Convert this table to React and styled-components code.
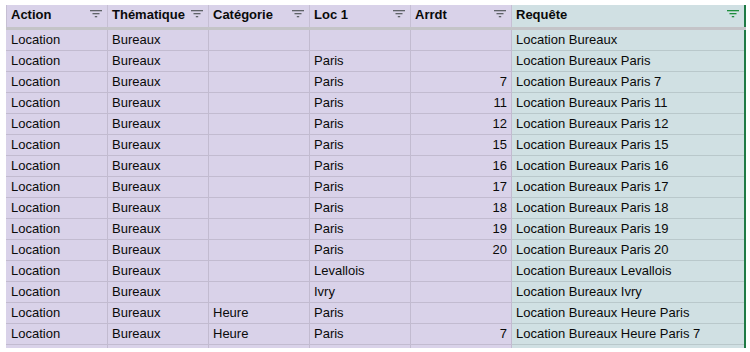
import React from 'react'
import styled, { createGlobalStyle } from 'styled-components'

const GlobalStyle = createGlobalStyle`
  html, body {
    margin: 0;
    padding: 0;
    background: #ffffff;
  }
`

const columns = [
  { label: 'Action', width: 101 },
  { label: 'Thématique', width: 101 },
  { label: 'Catégorie', width: 101 },
  { label: 'Loc 1', width: 101 },
  { label: 'Arrdt', width: 101 },
  { label: 'Requête', width: 233, result: true },
]

const rows = [
  ['Location', 'Bureaux', '', '', ''],
  ['Location', 'Bureaux', '', 'Paris', ''],
  ['Location', 'Bureaux', '', 'Paris', '7'],
  ['Location', 'Bureaux', '', 'Paris', '11'],
  ['Location', 'Bureaux', '', 'Paris', '12'],
  ['Location', 'Bureaux', '', 'Paris', '15'],
  ['Location', 'Bureaux', '', 'Paris', '16'],
  ['Location', 'Bureaux', '', 'Paris', '17'],
  ['Location', 'Bureaux', '', 'Paris', '18'],
  ['Location', 'Bureaux', '', 'Paris', '19'],
  ['Location', 'Bureaux', '', 'Paris', '20'],
  ['Location', 'Bureaux', '', 'Levallois', ''],
  ['Location', 'Bureaux', '', 'Ivry', ''],
  ['Location', 'Bureaux', 'Heure', 'Paris', ''],
  ['Location', 'Bureaux', 'Heure', 'Paris', '7'],
  ['', '', '', '', ''],
]

const requete = (r) => r.filter(Boolean).join(' ')

const FilterIcon = ({ color }) => (
  <svg width="12" height="8" viewBox="0 0 12 8">
    <rect x="0" y="0" width="12" height="1.3" fill={color} />
    <rect x="2.5" y="3" width="7" height="1.3" fill={color} />
    <rect x="4.8" y="6" width="2.4" height="1.3" fill={color} />
  </svg>
)

const App = () => (
  <Page>
    <GlobalStyle />
    <Sheet>
      <colgroup>
        {columns.map((c) => (
          <col key={c.label} style={{ width: c.width }} />
        ))}
      </colgroup>
      <thead>
        <tr>
          {columns.map((c) => (
            <HeadCell key={c.label} result={c.result ? 1 : 0}>
              <HeadInner>
                <span>{c.label}</span>
                <FilterIcon color={c.result ? '#1e8e3e' : '#5f6368'} />
              </HeadInner>
            </HeadCell>
          ))}
        </tr>
      </thead>
      <tbody>
        {rows.map((r, i) => (
          <tr key={i}>
            <Cell>{r[0]}</Cell>
            <Cell>{r[1]}</Cell>
            <Cell>{r[2]}</Cell>
            <Cell>{r[3]}</Cell>
            <Cell align="right">{r[4]}</Cell>
            <ResultCell>{requete(r)}</ResultCell>
          </tr>
        ))}
      </tbody>
    </Sheet>
  </Page>
)

export default App

const Page = styled.div`
  height: 348px;
  overflow: hidden;
  padding: 5px 0 0 6px;
  box-sizing: border-box;
  background: #ffffff;
`

const Sheet = styled.table`
  border-collapse: collapse;
  table-layout: fixed;
  width: 738px;
  font-family: 'Liberation Sans', Arial, sans-serif;
  font-size: 13px;
  color: #0a0a0a;
  border-right: 2px solid #1e7a45;
`

const HeadCell = styled.th`
  height: 23px;
  padding: 0 5px 3px 4px;
  box-sizing: border-box;
  background: ${(p) => (p.result ? '#d0e0e3' : '#d9d2e9')};
  border-left: 1px solid #c6bfd4;
  border-bottom: 3px solid #c4c4c8;
  text-align: left;
  font-weight: bold;
  white-space: nowrap;
  overflow: hidden;
`

const HeadInner = styled.div`
  display: flex;
  align-items: center;
  justify-content: space-between;
  gap: 2px;
`

const Cell = styled.td`
  height: 20px;
  padding: 0 4px;
  background: #d9d2e9;
  border: 1px solid #c2bbd0;
  border-top: none;
  text-align: ${(p) => p.align || 'left'};
  white-space: nowrap;
  overflow: hidden;
  &:first-child {
    border-left-color: #d9d2e9;
  }
`

const ResultCell = styled.td`
  height: 20px;
  padding: 0 4px;
  background: #d0e0e3;
  border-bottom: 1px solid #b9c8cb;
  border-left: 1px solid #c2bbd0;
  white-space: nowrap;
  overflow: hidden;
`
